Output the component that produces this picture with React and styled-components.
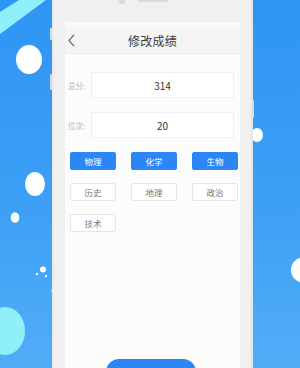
import React from "react";
import styled, { createGlobalStyle } from "styled-components";

const Global = createGlobalStyle`
  html, body { margin: 0; padding: 0; }
  body { font-family: "Noto Sans CJK SC", "Noto Sans", sans-serif; }
`;

const Stage = styled.div`
  position: relative;
  width: 300px;
  height: 368px;
  overflow: hidden;
  background: linear-gradient(180deg, #2f95f4 0%, #3d9ff5 55%, #52adf7 100%);
  display: flex;
  align-items: flex-start;
  padding-left: 52px;
  box-sizing: border-box;
`;

const Deco = styled.svg`
  position: absolute;
  left: 0;
  top: 0;
  width: 300px;
  height: 368px;
  pointer-events: none;
`;

const Phone = styled.div`
  position: relative;
  z-index: 1;
  width: 201px;
  height: 420px;
  box-sizing: border-box;
  padding: 22px 11px 0 12px;
  background: #f0f0f0;
  border-left: 1px solid #e6e6e6;
  border-right: 2px solid #e6e6e6;
`;

const SideKey = styled.div`
  position: absolute;
  ${(p) => (p.$right ? "right: -3px;" : "left: -3px;")}
  top: ${(p) => p.$top}px;
  width: 2px;
  height: ${(p) => p.$h}px;
  background: #dcdcdc;
  border-radius: 1px;
`;

const Camera = styled.div`
  position: absolute;
  left: 66px;
  top: -3px;
  width: 6px;
  height: 7px;
  border-radius: 50%;
  background: #d9d9d9;
`;

const Speaker = styled.div`
  position: absolute;
  left: 85px;
  top: -2px;
  width: 31px;
  height: 4px;
  border-radius: 2px;
  background: #dadada;
`;

const Screen = styled.div`
  height: 100%;
  background: #fcfcfc;
  display: flex;
  flex-direction: column;
`;

const StatusBar = styled.div`
  height: 6px;
  background: #f9f9f9;
`;

const NavBar = styled.div`
  position: relative;
  height: 25px;
  background: #f4f4f4;
  border-bottom: 1px solid #e9e9e9;
  display: flex;
  align-items: center;
  justify-content: center;
`;

const Back = styled.svg`
  position: absolute;
  left: 3px;
  top: 6px;
`;

const Title = styled.div`
  font-size: 12px;
  color: #3a3a3a;
  letter-spacing: 0.3px;
`;

const Body = styled.div`
  padding: 18px 6px 0 3px;
  display: flex;
  flex-direction: column;
`;

const Field = styled.div`
  display: flex;
  align-items: center;
  margin-bottom: 14px;
`;

const Label = styled.div`
  width: 23px;
  font-size: 7.5px;
  color: #b0b0b0;
`;

const Input = styled.div`
  flex: 1;
  height: 24px;
  background: #fff;
  border: 1px solid #eeeeee;
  display: flex;
  align-items: center;
  justify-content: center;
  font-size: 10px;
  color: #333;
`;

const Grid = styled.div`
  padding-left: 2px;
  display: grid;
  grid-template-columns: 46px 46px 46px;
  column-gap: 15px;
  row-gap: 13px;
`;

const Subject = styled.div`
  height: 18px;
  box-sizing: border-box;
  border-radius: 2px;
  display: flex;
  align-items: center;
  justify-content: center;
  font-size: 8.5px;
  background: ${(p) => (p.$on ? "#2c86f6" : "#fff")};
  color: ${(p) => (p.$on ? "#fff" : "#777")};
  border: 1px solid ${(p) => (p.$on ? "#2c86f6" : "#e6e6e6")};
`;

const Footer = styled.div`
  margin-top: 127px;
  display: flex;
  justify-content: center;
`;

const Submit = styled.div`
  width: 90px;
  height: 26px;
  border-radius: 13px;
  background: #2c86f6;
  color: #fff;
  font-size: 10px;
  display: flex;
  align-items: center;
  justify-content: center;
  padding-top: 4px;
  box-sizing: border-box;
`;

const subjects = [
  { name: "物理", on: true },
  { name: "化学", on: true },
  { name: "生物", on: true },
  { name: "历史" },
  { name: "地理" },
  { name: "政治" },
  { name: "技术" },
];

export default function App() {
  return (
    <>
      <Global />
      <Stage>
        <Deco viewBox="0 0 300 368">
          <polygon points="0,12 19,0 46,0 0,34" fill="#8ff0fb" />
          <ellipse cx="29" cy="59.5" rx="13" ry="14.5" fill="#fff" />
          <ellipse cx="35" cy="184" rx="10" ry="12" fill="#fff" />
          <ellipse cx="15" cy="217.5" rx="4.3" ry="5.3" fill="#fff" />
          <circle cx="43" cy="269.5" r="3" fill="#fff" />
          <circle cx="37" cy="274" r="1.2" fill="#fff" />
          <circle cx="46" cy="276" r="1.2" fill="#fff" />
          <circle cx="52" cy="291" r="1" fill="#e8f6ff" />
          <ellipse cx="5" cy="331" rx="20" ry="24" fill="#8ff0fb" />
          <ellipse cx="257" cy="135" rx="6" ry="7" fill="#fff" />
          <ellipse cx="303" cy="270" rx="12" ry="12.5" fill="#fff" />
        </Deco>
        <Phone>
          <SideKey $top={28} $h={12} />
          <SideKey $top={74} $h={16} />
          <SideKey $right $top={100} $h={18} />
          <Camera />
          <Speaker />
          <Screen>
            <StatusBar />
            <NavBar>
              <Back width="7" height="13" viewBox="0 0 7 13">
                <path d="M6 0.8 L1 6.5 L6 12.2" fill="none" stroke="#555" strokeWidth="1.1" />
              </Back>
              <Title>修改成绩</Title>
            </NavBar>
            <Body>
              <Field>
                <Label>总分:</Label>
                <Input>314</Input>
              </Field>
              <Field>
                <Label>位次:</Label>
                <Input>20</Input>
              </Field>
              <Grid>
                {subjects.map((s) => (
                  <Subject key={s.name} $on={s.on}>
                    {s.name}
                  </Subject>
                ))}
              </Grid>
              <Footer>
                <Submit>创建成绩</Submit>
              </Footer>
            </Body>
          </Screen>
        </Phone>
      </Stage>
    </>
  );
}
